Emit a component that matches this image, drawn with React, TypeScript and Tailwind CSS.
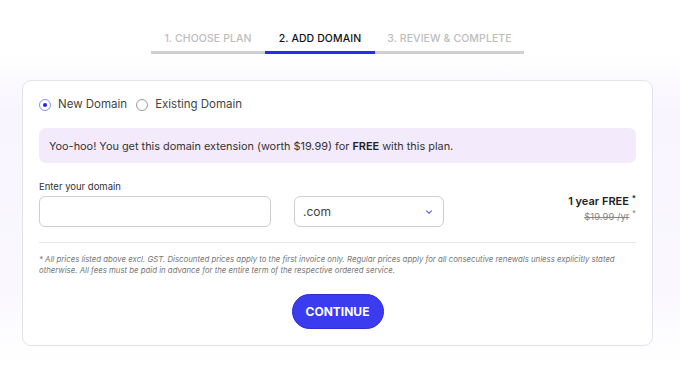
import React, { useState } from "react";

const steps = [
  { label: "1. CHOOSE PLAN", w: "w-[114px]", active: false },
  { label: "2. ADD DOMAIN", w: "w-[110px]", active: true },
  { label: "3. REVIEW & COMPLETE", w: "w-[149px]", active: false },
];

export default function App() {
  const [mode, setMode] = useState<"new" | "existing">("new");

  return (
    <div
      className="w-[680px] h-[366px] overflow-hidden bg-[linear-gradient(180deg,#ffffff_0%,#ffffff_14%,#f8f5fe_30%,#faf8fe_80%,#ffffff_100%)] text-[#333]"
      style={{ fontFamily: "Inter, 'Noto Sans', sans-serif" }}
    >
      {/* Step tabs */}
      <div className="flex pl-[151px] pt-[32px]">
        {steps.map((s) => (
          <div key={s.label} className={`${s.w} flex flex-col items-center`}>
            <span
              className={`text-[10.5px] leading-[14px] font-medium tracking-[0.1px] ${
                s.active ? "text-[#111]" : "text-[#bdbdbd]"
              }`}
            >
              {s.label}
            </span>
            <div className={`mt-[5px] h-[3px] w-full ${s.active ? "bg-[#2a2af0]" : "bg-[#cfcfcf]"}`} />
          </div>
        ))}
      </div>

      {/* Card */}
      <div className="ml-[22px] mt-[26px] h-[266px] w-[631px] rounded-[9px] border border-[#e4e2ea] bg-white px-[16px] pt-[15px]">
        <div className="flex items-center gap-[9px] text-[11.5px] text-[#444]">
          <label className="flex items-center gap-[7px] cursor-pointer" onClick={() => setMode("new")}>
            <span
              className={`flex h-[12px] w-[12px] items-center justify-center rounded-full border ${
                mode === "new" ? "border-[#8d8df5]" : "border-[#9a9a9a]"
              }`}
            >
              {mode === "new" && <span className="h-[4px] w-[4px] rounded-full bg-[#2424e8]" />}
            </span>
            New Domain
          </label>
          <label className="flex items-center gap-[7px] cursor-pointer" onClick={() => setMode("existing")}>
            <span
              className={`flex h-[12px] w-[12px] items-center justify-center rounded-full border ${
                mode === "existing" ? "border-[#8d8df5]" : "border-[#9a9a9a]"
              }`}
            >
              {mode === "existing" && <span className="h-[4px] w-[4px] rounded-full bg-[#2424e8]" />}
            </span>
            Existing Domain
          </label>
        </div>

        <div className="mt-[15px] flex h-[35px] items-center rounded-[7px] bg-[#f3ebfb] px-[10px] text-[10.9px] text-[#333]">
          <span>
            Yoo-hoo! You get this domain extension (worth $19.99) for <b className="font-semibold text-[#222]">FREE</b> with
            this plan.
          </span>
        </div>

        <div className="mt-[18px] flex items-end">
          <div className="flex flex-col">
            <span className="text-[9.5px] leading-[12px] text-[#333]">Enter your domain</span>
            <input
              className="mt-[3px] h-[31px] w-[232px] rounded-[6px] border border-[#cfcfcf] bg-white px-[8px] text-[12px] outline-none"
              type="text"
            />
          </div>
          <div className="ml-[23px] flex h-[31px] w-[150px] items-center justify-between rounded-[6px] border border-[#cfcfcf] px-[8px] text-[12px] text-[#444]">
            <span>.com</span>
            <svg width="8" height="6" viewBox="0 0 8 6" className="mr-[2px]">
              <path d="M1.5 1.8 L4 4.2 L6.5 1.8" fill="none" stroke="#5b5bf0" strokeWidth="1.1" strokeLinecap="round" />
            </svg>
          </div>
          <div className="ml-auto flex flex-col items-end pb-[3px]">
            <span className="text-[11px] font-semibold text-[#222]">
              1 year FREE <sup className="text-[8px]">*</sup>
            </span>
            <span className="mt-[1px] text-[9.5px] text-[#888]">
              <span className="line-through">$19.99 /yr</span> <sup className="text-[8px]">*</sup>
            </span>
          </div>
        </div>

        <div className="mt-[15px] h-[1px] bg-[#e8e8e8]" />

        <p className="mt-[11px] text-[7.8px] leading-[11px] italic text-[#777]">
          * All prices listed above excl. GST. Discounted prices apply to the first invoice only. Regular prices apply for
          all consecutive renewals unless explicitly stated otherwise. All fees must be paid in advance for the entire term
          of the respective ordered service.
        </p>

        <div className="mt-[18px] flex justify-center">
          <button className="h-[35px] w-[92px] rounded-full border border-[#2e2ed0] bg-[#3b3bf0] text-[12px] font-bold text-white">
            CONTINUE
          </button>
        </div>
      </div>
    </div>
  );
}
